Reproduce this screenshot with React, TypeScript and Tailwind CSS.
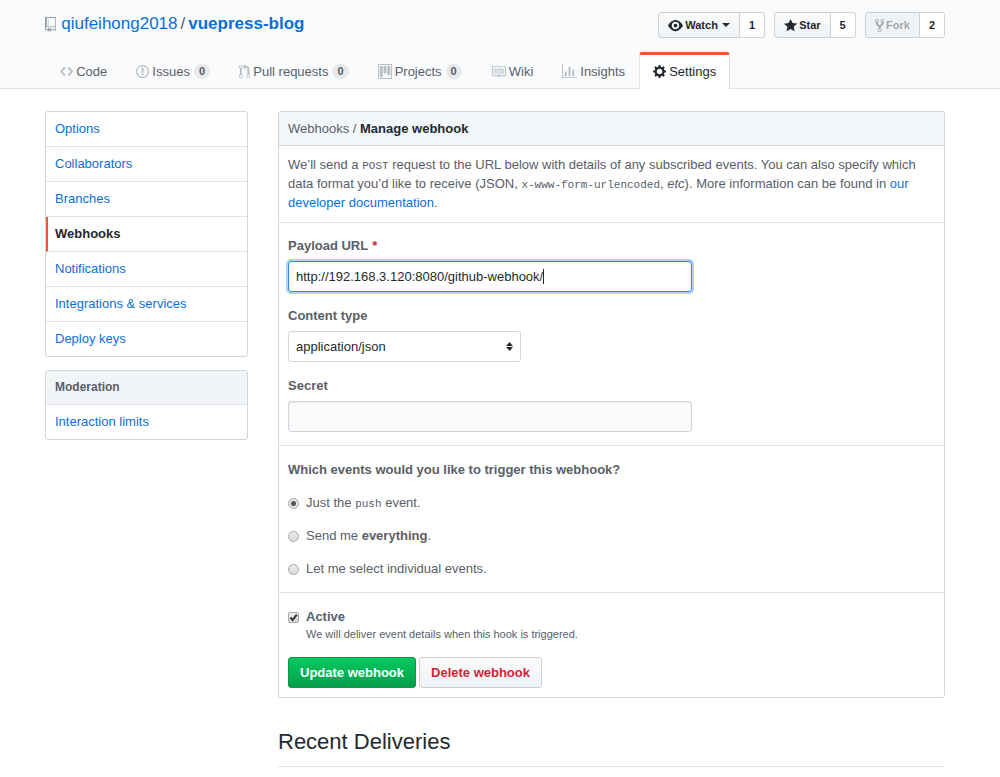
import { useState } from 'react';
import type { ReactNode } from 'react';

const ICONS = {
  repo: { w: 12, d: 'M4 9H3V8h1v1zm0-3H3v1h1V6zm0-2H3v1h1V4zm0-2H3v1h1V2zm8-1v12c0 .55-.45 1-1 1H6v2l-1.5-1.5L3 16v-2H1c-.55 0-1-.45-1-1V1c0-.55.45-1 1-1h10c.55 0 1 .45 1 1zm-1 10H1v2h2v-1h3v1h5v-2zm0-10H2v9h9V1z' },
  code: { w: 14, d: 'M9.5 3L8 4.5 11.5 8 8 11.5 9.5 13 14 8 9.5 3zm-5 0L0 8l4.5 5L6 11.5 2.5 8 6 4.5 4.5 3z' },
  issue: { w: 14, d: 'M7 2.3c3.14 0 5.7 2.56 5.7 5.7s-2.56 5.7-5.7 5.7A5.71 5.71 0 0 1 1.3 8c0-3.14 2.56-5.7 5.7-5.7zM7 1C3.14 1 0 4.14 0 8s3.14 7 7 7 7-3.14 7-7-3.14-7-7-7zm1 3H6v5h2V4zm0 6H6v2h2v-2z' },
  pull: { w: 12, d: 'M11 11.28V5c-.03-.78-.34-1.47-.94-2.06C9.46 2.35 8.78 2.03 8 2H7V0L4 3l3 3V4h1c.27.02.48.11.69.31.21.2.3.42.31.69v6.28A1.993 1.993 0 0 0 10 15a1.993 1.993 0 0 0 1-3.72zm-1 2.92c-.66 0-1.2-.55-1.2-1.2 0-.65.55-1.2 1.2-1.2.65 0 1.2.55 1.2 1.2 0 .65-.55 1.2-1.2 1.2zM4 3c0-1.11-.89-2-2-2a1.993 1.993 0 0 0-1 3.72v6.56A1.993 1.993 0 0 0 2 15a1.993 1.993 0 0 0 1-3.72V4.72c.59-.34 1-.98 1-1.72zm-.8 10c0 .66-.55 1.2-1.2 1.2-.65 0-1.2-.55-1.2-1.2 0-.65.55-1.2 1.2-1.2.65 0 1.2.55 1.2 1.2zM2 4.2C1.34 4.2.8 3.65.8 3c0-.65.55-1.2 1.2-1.2.65 0 1.2.55 1.2 1.2 0 .65-.55 1.2-1.2 1.2z' },
  project: { w: 15, d: 'M10 12h3V2h-3v10zm-4-2h3V2H6v8zm-4 4h3V2H2v12zm-1 1h13V1H1v14zM14 0H1a1 1 0 0 0-1 1v14a1 1 0 0 0 1 1h13a1 1 0 0 0 1-1V1a1 1 0 0 0-1-1z' },
  book: { w: 16, d: 'M3 5h4v1H3V5zm0 3h4V7H3v1zm0 2h4V9H3v1zm11-5h-4v1h4V5zm0 2h-4v1h4V7zm0 2h-4v1h4V9zm2-6v9c0 .55-.45 1-1 1H9.5l-1 1-1-1H2c-.55 0-1-.45-1-1V3c0-.55.45-1 1-1h5.5l1 1 1-1H15c.55 0 1 .45 1 1zm-8 .5L7.5 3H2v9h6V3.5zm7-.5H9.5l-.5.5V12h6V3z' },
  graph: { w: 16, d: 'M16 14v1H0V0h1v14h15zM5 13H3V8h2v5zm4 0H7V3h2v10zm4 0h-2V6h2v7z' },
  gear: { w: 14, d: 'M14 8.77v-1.6l-1.94-.64-.45-1.09.88-1.84-1.13-1.13-1.81.91-1.09-.45-.69-1.92h-1.6l-.63 1.94-1.11.45-1.84-.88-1.13 1.13.91 1.81-.45 1.09L0 7.23v1.59l1.94.64.45 1.09-.88 1.84 1.13 1.13 1.81-.91 1.09.45.69 1.92h1.59l.63-1.94 1.11-.45 1.84.88 1.13-1.13-.92-1.81.47-1.09L14 8.75v.02zM7 11c-1.66 0-3-1.34-3-3s1.34-3 3-3 3 1.34 3 3-1.34 3-3 3z' },
  eye: { w: 16, d: 'M8.06 2C3 2 0 8 0 8s3 6 8.06 6C13 14 16 8 16 8s-3-6-7.94-6zM8 12c-2.2 0-4-1.78-4-4 0-2.2 1.8-4 4-4 2.22 0 4 1.8 4 4 0 2.22-1.78 4-4 4zm2-4c0 1.11-.89 2-2 2-1.11 0-2-.89-2-2 0-1.11.89-2 2-2 1.11 0 2 .89 2 2z' },
  star: { w: 14, d: 'M14 6l-4.9-.64L7 1 4.9 5.36 0 6l3.6 3.26L2.67 14 7 11.67 11.33 14l-.93-4.74L14 6z' },
  fork: { w: 10, d: 'M8 1a1.993 1.993 0 0 0-1 3.72V6L5 8 3 6V4.72A1.993 1.993 0 0 0 2 1a1.993 1.993 0 0 0-1 3.72V6.5l3 3v1.78A1.993 1.993 0 0 0 5 15a1.993 1.993 0 0 0 1-3.72V9.5l3-3V4.72A1.993 1.993 0 0 0 8 1zM2 4.2C1.34 4.2.8 3.65.8 3c0-.65.55-1.2 1.2-1.2.65 0 1.2.55 1.2 1.2 0 .65-.55 1.2-1.2 1.2zm3 10c-.66 0-1.2-.55-1.2-1.2 0-.65.55-1.2 1.2-1.2.65 0 1.2.55 1.2 1.2 0 .65-.55 1.2-1.2 1.2zm3-10c-.66 0-1.2-.55-1.2-1.2 0-.65.55-1.2 1.2-1.2.65 0 1.2.55 1.2 1.2 0 .65-.55 1.2-1.2 1.2z' },
};

type IconName = keyof typeof ICONS;

const TABS: { label: string; icon: IconName; count?: number; active?: boolean }[] = [
  { label: 'Code', icon: 'code' },
  { label: 'Issues', icon: 'issue', count: 0 },
  { label: 'Pull requests', icon: 'pull', count: 0 },
  { label: 'Projects', icon: 'project', count: 0 },
  { label: 'Wiki', icon: 'book' },
  { label: 'Insights', icon: 'graph' },
  { label: 'Settings', icon: 'gear', active: true },
];

const MENU = ['Options', 'Collaborators', 'Branches', 'Webhooks', 'Notifications', 'Integrations & services', 'Deploy keys'];

function Icon({ name, className = '' }: { name: IconName; className?: string }) {
  const { w, d } = ICONS[name];
  return (
    <svg className={`h-[15px] w-auto shrink-0 fill-current ${className}`} viewBox={`0 0 ${w} 16`} aria-hidden="true">
      <path fillRule="evenodd" d={d} />
    </svg>
  );
}

function Code({ children }: { children: ReactNode }) {
  return <code className="font-['Liberation_Mono',monospace] text-[11px] leading-none">{children}</code>;
}

function SocialButton({ icon, label, count, caret, disabled }: { icon: IconName; label: string; count: number; caret?: boolean; disabled?: boolean }) {
  return (
    <li className="flex h-[26px] text-[11px] font-bold">
      <button
        disabled={disabled}
        className="flex items-center gap-[2px] rounded-l-[3px] border border-[#cdd0d3] bg-linear-to-b from-[#fafbfc] to-[#eff3f6] px-[9px] disabled:from-[#eff3f6] disabled:text-[#24292e]/40"
      >
        <Icon name={icon} />
        {label}
        {caret && <span className="ml-[2px] border-x-4 border-t-4 border-x-transparent border-t-current" />}
      </button>
      <a href="#" className="flex items-center rounded-r-[3px] border border-l-0 border-[#d1d4d6] bg-white px-[9px]">{count}</a>
    </li>
  );
}

function Field({ id, label, required, children }: { id: string; label: string; required?: boolean; children: ReactNode }) {
  return (
    <div>
      <label htmlFor={id} className="mb-[6px] block font-bold">
        {label}
        {required && <span className="ml-1 text-[#cb2431]">*</span>}
      </label>
      {children}
    </div>
  );
}

function EventOption({ value, selected, onSelect, children }: { value: string; selected: string; onSelect: (v: string) => void; children: ReactNode }) {
  return (
    <label className="flex items-center gap-[7px]">
      <input
        type="radio"
        name="events"
        value={value}
        checked={selected === value}
        onChange={() => onSelect(value)}
        className={
          selected === value
            ? 'mt-px size-[11px] appearance-none rounded-full border border-[#a8a8a8] bg-[radial-gradient(circle,#555_0,#555_2px,#e6e6e6_3px)]'
            : 'mt-px size-[11px] appearance-none rounded-full border border-[#a8a8a8] bg-linear-to-b from-[#ececec] to-[#d8d8d8]'
        }
      />
      <span>{children}</span>
    </label>
  );
}

export default function App() {
  const [url, setUrl] = useState('http://192.168.3.120:8080/github-webhook/');
  const [event, setEvent] = useState('push');
  const [active, setActive] = useState(true);

  return (
    <div className="min-h-screen bg-white font-['Liberation_Sans',Arial,sans-serif] text-[13px] leading-[19px] text-[#24292e]">
      <header className="border-b border-[#e1e4e8] bg-[#fafbfc] pr-[55px] pl-[45px]">
        <div className="flex items-start justify-between pt-3">
          <h1 className="flex items-center text-[17px] leading-6 text-[#586069]">
            <Icon name="repo" className="mr-[5px] text-[#959da5]" />
            <a href="#" className="text-[#0a6fd8]">qiufeihong2018</a>
            <span className="mx-[3px]">/</span>
            <a href="#" className="font-bold text-[#0a6fd8]">vuepress-blog</a>
          </h1>
          <ul className="flex gap-[9px]">
            <SocialButton icon="eye" label="Watch" count={1} caret />
            <SocialButton icon="star" label="Star" count={5} />
            <SocialButton icon="fork" label="Fork" count={2} disabled />
          </ul>
        </div>
        <nav className="mt-[14px] -mb-px flex">
          {TABS.map(t => (
            <a
              key={t.label}
              href="#"
              className={
                t.active
                  ? 'flex h-[37px] items-center gap-[3px] rounded-t-[3px] border-x border-t-3 border-x-[#e1e4e8] border-t-[#f05a28] bg-white px-[13px] pb-[2px]'
                  : 'flex h-[37px] items-center gap-[3px] border-x border-t-3 border-transparent pr-[13px] pl-[14px] pb-[2px] text-[#586069]'
              }
            >
              <Icon name={t.icon} className={t.active ? '' : 'text-[#b8bdc2]'} />
              {t.label}
              {t.count !== undefined && (
                <span className="ml-px rounded-full bg-[#1b1f23]/8 px-[5px] text-[11px] leading-[15px] font-bold">{t.count}</span>
              )}
            </a>
          ))}
        </nav>
      </header>

      <div className="flex items-start gap-[30px] pt-[22px] pr-[55px] pb-[9px] pl-[45px]">
        <aside className="w-[203px] shrink-0">
          <nav className="overflow-hidden rounded-[3px] border border-[#d1d5da]">
            {MENU.map(item => (
              <a
                key={item}
                href="#"
                className={
                  item === 'Webhooks'
                    ? 'block border-b border-l-2 border-b-[#e1e4e8] border-l-[#f05a28] py-[7px] pr-[9px] pl-[7px] leading-5 font-bold'
                    : 'block border-b border-[#e1e4e8] px-[9px] py-[7px] leading-5 text-[#0a6fd8] last:border-b-0'
                }
              >
                {item}
              </a>
            ))}
          </nav>
          <nav className="mt-[13px] overflow-hidden rounded-[3px] border border-[#d1d5da]">
            <h3 className="border-b border-[#e1e4e8] bg-[#f1f5f8] px-[9px] py-[7px] text-[12px] font-bold text-[#586069]">Moderation</h3>
            <a href="#" className="block px-[9px] py-[7px] leading-5 text-[#0a6fd8]">Interaction limits</a>
          </nav>
        </aside>

        <main className="min-w-0 flex-1 text-[#586069]">
          <form className="rounded-[3px] border border-[#d1d5da]" onSubmit={e => e.preventDefault()}>
            <h2 className="border-b border-[#d1d5da] bg-[#f4f7f9] px-[9px] py-[7px]">
              Webhooks / <strong className="text-[#24292e]">Manage webhook</strong>
            </h2>

            <p className="border-b border-[#e1e4e8] px-[9px] pt-[9px] pb-[10px]">
              We’ll send a <Code>POST</Code> request to the URL below with details of any subscribed events. You can also specify
              which data format you’d like to receive (JSON, <Code>x-www-form-urlencoded</Code>, <em>etc</em>). More information
              can be found in <a href="#" className="text-[#0a6fd8]">our developer documentation</a>.
            </p>

            <div className="flex flex-col gap-[14px] border-b border-[#e1e4e8] px-[9px] py-[13px]">
              <Field id="url" label="Payload URL" required>
                <div className="relative max-w-[404px]">
                  <input
                    id="url"
                    type="text"
                    value={url}
                    onChange={e => setUrl(e.target.value)}
                    className="block h-[31px] w-full rounded-[3px] border border-[#2188ff] px-[7px] text-[#24292e] shadow-[inset_0_1px_2px_rgba(27,31,35,0.08),0_0_0_2px_rgba(3,102,214,0.3)] outline-none"
                  />
                  <span className="absolute top-2 left-[255px] h-[15px] w-px bg-[#24292e]" />
                </div>
              </Field>
              <Field id="content-type" label="Content type">
                <div className="relative max-w-[233px]">
                  <select
                    id="content-type"
                    defaultValue="application/json"
                    className="block h-[31px] w-full appearance-none rounded-[3px] border border-[#d1d5da] bg-white px-[7px] text-[#24292e]"
                  >
                    <option>application/json</option>
                    <option>application/x-www-form-urlencoded</option>
                  </select>
                  <svg className="pointer-events-none absolute top-[11px] right-2 h-[9px] w-[7px] fill-[#24292e]" viewBox="0 0 7 9">
                    <path d="M3.5 0L7 4H0zM3.5 9L0 5h7z" />
                  </svg>
                </div>
              </Field>
              <Field id="secret" label="Secret">
                <input
                  id="secret"
                  type="text"
                  className="block h-[31px] w-full max-w-[404px] rounded-[3px] border border-[#d1d5da] bg-[#fafbfc] px-[7px] shadow-[inset_0_1px_2px_rgba(27,31,35,0.08)]"
                />
              </Field>
            </div>

            <fieldset className="flex flex-col gap-[14px] border-b border-[#e1e4e8] px-[9px] py-[14px]">
              <legend className="float-left font-bold">Which events would you like to trigger this webhook?</legend>
              <EventOption value="push" selected={event} onSelect={setEvent}>
                Just the <Code>push</Code> event.
              </EventOption>
              <EventOption value="all" selected={event} onSelect={setEvent}>
                Send me <strong>everything</strong>.
              </EventOption>
              <EventOption value="some" selected={event} onSelect={setEvent}>
                Let me select individual events.
              </EventOption>
            </fieldset>

            <div className="px-[9px] pt-[14px] pb-[9px]">
              <label className="flex items-center gap-[7px] font-bold">
                <span className="relative mt-px">
                  <input
                    type="checkbox"
                    checked={active}
                    onChange={e => setActive(e.target.checked)}
                    className="peer block size-[11px] appearance-none rounded-[2px] border border-[#a8a8a8] bg-linear-to-b from-[#ececec] to-[#d8d8d8]"
                  />
                  <svg className="pointer-events-none absolute inset-0 hidden size-[11px] peer-checked:block" viewBox="0 0 11 11">
                    <path d="M2.5 5.5l2.2 2.5L8.8 2.6" fill="none" stroke="#333" strokeWidth="2" />
                  </svg>
                </span>
                Active
              </label>
              <p className="pl-[18px] text-[11px] leading-[17px]">We will deliver event details when this hook is triggered.</p>
              <div className="mt-[14px] flex gap-[3px]">
                <button
                  type="submit"
                  className="h-[31px] rounded-[3px] border border-[#0c9a48] bg-linear-to-b from-[#02c95f] to-[#069e4b] px-[11px] font-bold text-white"
                >
                  Update webhook
                </button>
                <button
                  type="button"
                  className="h-[31px] rounded-[3px] border border-[#cdd0d3] bg-linear-to-b from-[#fafbfc] to-[#eff3f6] px-[11px] font-bold text-[#d51f38]"
                >
                  Delete webhook
                </button>
              </div>
            </div>
          </form>

          <h2 className="mt-[30px] border-b border-[#e1e4e8] pb-[10px] text-[22px] leading-7 text-[#24292e]">Recent Deliveries</h2>
        </main>
      </div>
    </div>
  );
}
